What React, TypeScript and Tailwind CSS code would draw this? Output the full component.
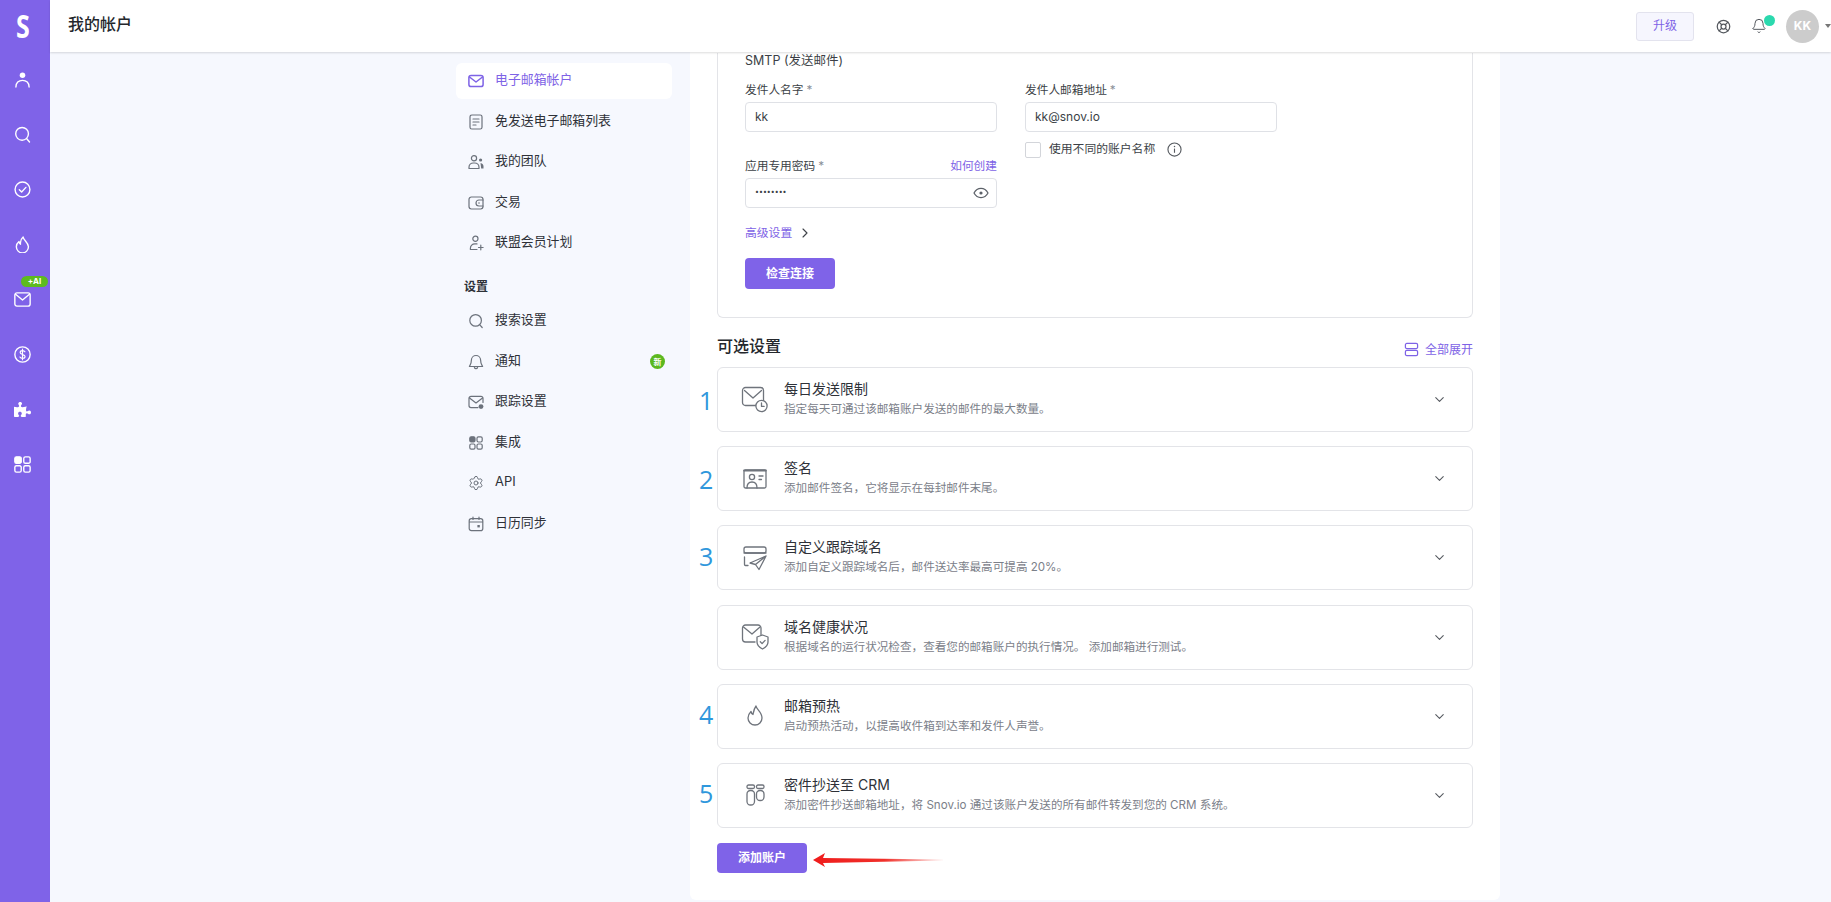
import React from "react";
import { Bell, LifeBuoy, Settings, ChevronDown, ChevronRight } from "lucide-react";
import { FaPuzzlePiece } from "react-icons/fa";

const S16 = ({ children, className = "" }: { children: React.ReactNode; className?: string }) => (
  <svg viewBox="0 0 16 16" fill="none" stroke="currentColor" strokeWidth={1.2} strokeLinecap="round" strokeLinejoin="round" className={`w-4 h-4 ${className}`}>
    {children}
  </svg>
);

const MailI = ({ w = 1.2 }: { w?: number }) => (
  <S16>
    <rect x="0.9" y="2.4" width="14.2" height="11.2" rx="2.2" strokeWidth={w} />
    <path d="M1.5 4 8 9l6.5-5" strokeWidth={w} />
  </S16>
);
const DocI = () => (
  <S16>
    <rect x="2" y="1" width="12" height="14" rx="1.8" />
    <path d="M5 5h6M5 8h6M5 11h3" />
  </S16>
);
const TeamI = () => (
  <S16>
    <circle cx="6" cy="4.2" r="2.6" />
    <path d="M1 14.5v-1.2A4.3 4.3 0 0 1 5.3 9h1.4a4.3 4.3 0 0 1 4.3 4.3v1.2z" />
    <circle cx="12.6" cy="6" r="1.6" fill="currentColor" stroke="none" />
    <path d="M12.5 9c2 .3 3 2 3 3.5v2h-2.3z" fill="currentColor" stroke="none" />
  </S16>
);
const WalletI = () => (
  <S16>
    <rect x="1" y="2" width="14" height="12" rx="2.4" />
    <path d="M15 5h-4a3 3 0 0 0 0 6h4" />
    <circle cx="11" cy="8" r="0.8" fill="currentColor" stroke="none" />
  </S16>
);
const AffI = () => (
  <S16>
    <circle cx="7.4" cy="3.8" r="2.6" />
    <path d="M2.4 14.5v-1.2a4.4 4.4 0 0 1 4.4-4.4H9M2.4 14.5H9M12.8 10.2v4.6M10.5 12.5h4.6" />
  </S16>
);
const SearchI = () => (
  <S16>
    <circle cx="7.6" cy="7.4" r="5.8" />
    <path d="m11.8 11.8 2.4 2.7" />
  </S16>
);
const BellI = () => (
  <S16>
    <path d="M8 1.5A4.6 4.6 0 0 0 3.4 6c0 4-1.4 5.4-2 6.5h13.2c-.6-1.1-2-2.5-2-6.5A4.6 4.6 0 0 0 8 1.5z" />
    <path d="M6.4 13.5a1.7 1.7 0 0 0 3.2 0" />
  </S16>
);
const TrackI = () => (
  <S16>
    <path d="M15 8.5V4.4a2 2 0 0 0-2-2H3a2 2 0 0 0-2 2v7.2a2 2 0 0 0 2 2h7" />
    <path d="M1.5 4 8 9l6.500-5" />
    <circle cx="13" cy="12.6" r="2.4" fill="currentColor" stroke="none" />
  </S16>
);
const GridI = () => (
  <S16>
    <rect x="1.8" y="1.8" width="5.2" height="5.2" rx="1.4" fill="currentColor" />
    <rect x="9" y="1.8" width="5.2" height="5.2" rx="1.4" />
    <rect x="1.8" y="9" width="5.2" height="5.2" rx="1.4" />
    <rect x="9" y="9" width="5.2" height="5.2" rx="1.4" />
  </S16>
);
const CalI = () => (
  <S16>
    <rect x="1.2" y="2.6" width="13.6" height="12" rx="2.2" />
    <path d="M1.5 6h13M5 1v2.5M11 1v2.5" />
    <rect x="9.4" y="9" width="2.4" height="2.4" fill="currentColor" stroke="none" />
  </S16>
);

const NavItem = ({ icon, label, active, badge }: { icon: React.ReactNode; label: string; active?: boolean; badge?: boolean }) => (
  <div className={`h-9 mb-[4.5px] rounded-md flex items-center pl-3 pr-[7px] ${active ? "bg-white text-[#7e63e6]" : "text-[#2e3138]"}`}>
    <span className={`w-4 h-4 mr-[11px] ${active ? "text-[#7e63e6]" : "text-[#6c727c]"}`}>{icon}</span>
    <span className="text-[12.9px] leading-4 flex-1 mb-[2px]">{label}</span>
    {badge && (
      <span className="w-[15px] h-[15px] rounded-full bg-[#5cb81f] text-white text-[8px] font-bold flex items-center justify-center">新</span>
    )}
  </div>
);

const Field = ({ label, value, right, eye }: { label: string; value: string; right?: string; eye?: boolean }) => (
  <div className="w-[252px]">
    <div className="flex justify-between h-4 mb-1 text-[11.7px] leading-4">
      <span className="text-[#3b3f46]">
        {label}
        <span className="text-[#8a8f98] ml-[3px]">*</span>
      </span>
      {right && <span className="text-[#7e63e6]">{right}</span>}
    </div>
    <div className="h-[30px] rounded border border-[#dfe1e6] bg-white flex items-center justify-between pl-[9px] pr-[7px] text-xs text-[#3b3f46]">
      <span className={eye ? "text-[7px] mb-[2px]" : ""}>{value}</span>
      {eye && (
        <svg viewBox="0 0 16 16" className="w-4 h-4" fill="none" stroke="#5b6068" strokeWidth="1.2">
          <path d="M1 8c1.6-3 4-4.6 7-4.6S13.4 5 15 8c-1.6 3-4 4.6-7 4.6S2.6 11 1 8z" />
          <circle cx="8" cy="8" r="1.6" fill="#5b6068" stroke="none" />
        </svg>
      )}
    </div>
  </div>
);

const A = ({ children, w = 28, h = 28 }: { children: React.ReactNode; w?: number; h?: number }) => (
  <svg width={w} height={h} viewBox={`0 0 ${w} ${h}`} fill="none" stroke="#6f747c" strokeWidth={1.3} strokeLinecap="round" strokeLinejoin="round">
    {children}
  </svg>
);
const I1 = () => (
  <A>
    <rect x="1.5" y="1.5" width="21" height="18" rx="3" />
    <path d="M3.5 4.5 12 12l8.5-7.5" />
    <circle cx="20.5" cy="20" r="5.6" fill="#fff" />
    <path d="M20.5 17v3.4h2.6" />
  </A>
);
const I2 = () => (
  <A>
    <rect x="3" y="5" width="22" height="18" rx="1.5" />
    <path d="M3 5.500h22" strokeWidth={1.8} />
    <circle cx="11" cy="12" r="2.6" />
    <path d="M6 23c0-4 2-6 5-6s5 2 5 6M18 11h4M18 14.500h2.500" />
  </A>
);
const I3 = () => (
  <A>
    <rect x="3" y="3" width="22" height="6" rx="2" />
    <path d="M3 9h22" />
    <path d="M3.500 13v7.500a1 1 0 0 0 1 1H7" />
    <path d="M25 12 9 19l5.500 1.500 3.500 5zM25 12 14.500 20.500" />
  </A>
);
const I4 = () => (
  <A>
    <path d="M20 13V5a3 3 0 0 0-3-3H4.500a3 3 0 0 0-3 3v11a3 3 0 0 0 3 3H14" />
    <path d="M2.500 4 11 11l8-7" />
    <path d="M21.500 12 27 14v5c0 3.500-2.500 5.500-5.500 7-3-1.500-5.500-3.500-5.500-7v-5z" fill="#fff" />
    <path d="m19.300 18.800 1.800 1.800 3-3.200" />
  </A>
);
const I5 = () => (
  <A>
    <path d="M15 4c.5 3.500 6 6 6 12a7 7 0 0 1-14 0c0-3 1.500-5 3-6.500.3 1.500 1 2.500 2 3C12.500 10 13 6.500 15 4z" />
  </A>
);
const I6 = () => (
  <A>
    <rect x="6" y="4" width="7.500" height="3.500" rx="1.500" />
    <rect x="15.500" y="4" width="7.500" height="3.500" rx="1.500" />
    <rect x="6" y="9.500" width="7.500" height="14.500" rx="3.500" />
    <rect x="15.500" y="9.500" width="7.500" height="10" rx="3.500" />
  </A>
);

const Card = ({ icon, title, desc, mark, markTop = "top-[16px]" }: { icon: React.ReactNode; title: string; desc: string; mark?: string; markTop?: string }) => (
  <div className="relative h-[65px] rounded-md border border-[#e3e4e8] bg-white flex items-center pl-[23px] pr-[25px]">
    {mark && <span className={`absolute left-[-19px] text-[25px] leading-8 text-[#2f97dc] font-['Open_Sans',sans-serif] ${markTop}`}>{mark}</span>}
    <span className="w-7 h-7 mr-[15px]">{icon}</span>
    <div className="flex-1">
      <div className="text-[14px] leading-5 text-[#2e3138] mt-[-1px]">{title}</div>
      <div className="text-[11.6px] leading-5 text-[#7b8089]">{desc}</div>
    </div>
    <ChevronDown className="w-[15px] h-[15px] text-[#55595f]" strokeWidth={1.7} />
  </div>
);

const Side = ({ children }: { children: React.ReactNode }) => (
  <div className="relative h-[55px] pr-[5px] flex items-center justify-center text-white">{children}</div>
);
const SV = ({ children }: { children: React.ReactNode }) => (
  <svg viewBox="0 0 16 16" className="w-[17px] h-[17px]" fill="none" stroke="#fff" strokeWidth={1.3} strokeLinecap="round" strokeLinejoin="round">
    {children}
  </svg>
);

export default function App() {
  return (
    <div className="h-[902px] w-[1831px] overflow-hidden flex bg-[#f6f8fe] font-[Inter,'Noto_Sans_CJK_SC',sans-serif]">
      <aside className="w-[50px] shrink-0 bg-[#7f63e8] flex flex-col items-stretch">
        <div className="h-[52px] pr-[5px] flex items-center justify-center text-white text-[32px] font-bold font-['Open_Sans',sans-serif]">
          <span className="block scale-x-[0.78]">S</span>
        </div>
        <Side>
          <SV>
            <circle cx="8" cy="4" r="2.6" fill="#fff" stroke="none" />
            <path d="M1.800 15c0-4 2.500-6.200 6.200-6.200s6.200 2.200 6.200 6.200" />
          </SV>
        </Side>
        <Side>
          <SV>
            <circle cx="7.600" cy="7.400" r="6" />
            <path d="m12 12 2.600 3" />
          </SV>
        </Side>
        <Side>
          <SV>
            <circle cx="8" cy="8" r="7" />
            <path d="m5 8.200 2.200 2.200 4-4.400" />
          </SV>
        </Side>
        <Side>
          <SV>
            <path d="M8.600 1c.4 3 5 5 5 9.200a5.700 5.700 0 0 1-11.400 0c0-2.300 1.100-3.900 2.500-5 .2 1.200.6 1.900 1.400 2.500C5.800 5.600 6.800 2.600 8.600 1z" />
          </SV>
        </Side>
        <Side>
          <SV>
            <rect x="0.800" y="1.800" width="14.400" height="12.400" rx="2" />
            <path d="M1.500 3 8 8.500 14.500 3" />
          </SV>
          <span className="absolute left-[21px] top-[4px] w-[27px] h-[11px] rounded-full bg-[#5dbb1f] text-white text-[8px] leading-[11px] font-bold text-center">+AI</span>
        </Side>
        <Side>
          <SV>
            <circle cx="8" cy="8" r="7.200" />
            <path d="M10.300 5.500c-.4-.8-1.200-1.200-2.300-1.200-1.300 0-2.200.7-2.200 1.800 0 2.400 4.600 1.300 4.600 3.800 0 1.100-1 1.800-2.400 1.800-1.100 0-2-.5-2.400-1.300M8 3v10" strokeWidth={1.100} />
          </SV>
        </Side>
        <Side>
          <FaPuzzlePiece className="w-[17px] h-[17px] text-white" />
        </Side>
        <Side>
          <SV>
            <rect x="0.800" y="0.800" width="6" height="6" rx="1.500" fill="#fff" />
            <rect x="9.200" y="0.800" width="6" height="6" rx="1.500" />
            <rect x="0.800" y="9.200" width="6" height="6" rx="1.500" />
            <rect x="9.200" y="9.200" width="6" height="6" rx="1.500" />
          </SV>
        </Side>
      </aside>

      <div className="flex-1 min-w-0 flex flex-col">
        <header className="relative z-10 h-[52px] shrink-0 bg-white shadow-[0_1px_2px_rgba(0,0,0,0.14)] flex items-center pl-[18px]">
          <h1 className="text-base leading-6 font-medium text-[#24272c] mb-[4px]">我的帐户</h1>
          <div className="ml-auto flex items-center">
            <button className="w-[58px] h-[29px] mr-[22px] rounded-[3px] border border-[#e3e3ee] bg-[#f6f6fe] text-xs text-[#7e63e6]">升级</button>
            <LifeBuoy className="w-[15px] h-[15px] text-[#55595f] mr-[20px]" strokeWidth={2} />
            <div className="relative w-4 h-4 mr-[19px]">
              <Bell className="w-4 h-4 text-[#55595f]" strokeWidth={1.5} />
              <span className="absolute left-[13px] top-[-3px] w-[11px] h-[11px] rounded-full bg-[#2bd9ae]" />
            </div>
            <div className="w-[33px] h-[33px] rounded-full bg-[#cccccc] text-white text-xs font-bold flex items-center justify-center mr-[6px]">KK</div>
            <span className="w-0 h-0 border-x-[3.5px] border-x-transparent border-t-[4px] border-t-[#777]" />
          </div>
        </header>

        <div className="flex-1 min-h-0 flex pl-[406px]">
          <nav className="w-[216px] pt-[11px] mr-[18px]">
            <NavItem active icon={<MailI w={1.5} />} label="电子邮箱帐户" />
            <NavItem icon={<DocI />} label="免发送电子邮箱列表" />
            <NavItem icon={<TeamI />} label="我的团队" />
            <NavItem icon={<WalletI />} label="交易" />
            <NavItem icon={<AffI />} label="联盟会员计划" />
            <div className="h-4 mt-[18px] mb-[8px] pl-[8px] text-xs leading-4 font-bold text-[#2e3138]">设置</div>
            <NavItem icon={<SearchI />} label="搜索设置" />
            <NavItem badge icon={<BellI />} label="通知" />
            <NavItem icon={<TrackI />} label="跟踪设置" />
            <NavItem icon={<GridI />} label="集成" />
            <NavItem icon={<Settings className="w-4 h-4" strokeWidth={1.5} />} label="API" />
            <NavItem icon={<CalI />} label="日历同步" />
          </nav>

          <main className="w-[810px] h-[848px] bg-white rounded-b-md pl-[27px] pr-[27px]">
            <section className="h-[264.5px] rounded-b-md border border-t-0 border-[#e3e4e8] pl-[27px]">
              <div className="h-4 mt-[1px] text-[12.5px] leading-4 text-[#3b3f46]">SMTP (发送邮件)</div>
              <div className="flex gap-[28px] mt-[13px]">
                <div className="w-[252px]">
                  <Field label="发件人名字" value="kk" />
                  <div className="mt-[26px]">
                    <Field label="应用专用密码" value="••••••••" right="如何创建" eye />
                  </div>
                </div>
                <div className="w-[252px]">
                  <Field label="发件人邮箱地址" value="kk@snov.io" />
                  <div className="flex items-center mt-[9px] text-[11.8px] text-[#3b3f46]">
                    <span className="w-4 h-4 rounded-[2px] border border-[#d3d5da] mr-2" />
                    <span>使用不同的账户名称</span>
                    <svg viewBox="0 0 16 16" className="w-[15px] h-[15px] ml-[12px]" fill="none" stroke="#55595f" strokeWidth="1.200">
                      <circle cx="8" cy="8" r="7" />
                      <path d="M8 7v4.500" />
                      <circle cx="8" cy="4.700" r="0.800" fill="#55595f" stroke="none" />
                    </svg>
                  </div>
                </div>
              </div>
              <div className="flex items-center h-4 mt-[17px] text-[11.8px] leading-4 text-[#7e63e6]">
                <span>高级设置</span>
                <ChevronRight className="w-[16px] h-[16px] ml-[5px] text-[#3f4349]" strokeWidth={1.7} />
              </div>
              <button className="block w-[90px] h-[31px] mt-[17px] rounded-[4px] bg-[#7f63e8] text-xs font-bold text-white">检查连接</button>
            </section>

            <div className="flex justify-between items-end h-6 mt-[16px]">
              <h2 className="text-base leading-6 font-medium text-[#24272c]">可选设置</h2>
              <div className="flex items-center h-4 text-xs text-[#7e63e6]">
                <svg viewBox="0 0 16 16" className="w-[15px] h-[15px] mr-[6px]" fill="none" stroke="#7e63e6" strokeWidth="1.300">
                  <rect x="1.500" y="1.500" width="13" height="5.500" rx="1.500" />
                  <rect x="1.500" y="9" width="13" height="5.500" rx="1.500" />
                </svg>
                全部展开
              </div>
            </div>

            <div className="flex flex-col gap-[14.2px] mt-[9.5px]">
              <Card mark="1" icon={<I1 />} title="每日发送限制" desc="指定每天可通过该邮箱账户发送的邮件的最大数量。" />
              <Card mark="2" icon={<I2 />} title="签名" desc="添加邮件签名，它将显示在每封邮件末尾。" />
              <Card mark="3" markTop="top-[14px]" icon={<I3 />} title="自定义跟踪域名" desc="添加自定义跟踪域名后，邮件送达率最高可提高 20%。" />
              <Card icon={<I4 />} title="域名健康状况" desc="根据域名的运行状况检查，查看您的邮箱账户的执行情况。 添加邮箱进行测试。" />
              <Card mark="4" markTop="top-[13px]" icon={<I5 />} title="邮箱预热" desc="启动预热活动，以提高收件箱到达率和发件人声誉。" />
              <Card mark="5" markTop="top-[13px]" icon={<I6 />} title="密件抄送至 CRM" desc="添加密件抄送邮箱地址，将 Snov.io 通过该账户发送的所有邮件转发到您的 CRM 系统。" />
            </div>

            <div className="relative mt-[15px]">
              <button className="block w-[90px] h-[30px] rounded-[4px] bg-[#7f63e8] text-xs font-bold text-white">添加账户</button>
              <svg className="absolute left-[95px] top-[9px]" width="132" height="16" viewBox="0 0 132 16">
                <defs>
                  <linearGradient id="ar" x1="0" x2="1" y1="0" y2="0">
                    <stop offset="0" stopColor="#ef1c1c" />
                    <stop offset="0.55" stopColor="#f0302a" />
                    <stop offset="1" stopColor="#f0302a" stopOpacity="0.05" />
                  </linearGradient>
                </defs>
                <path d="M1 8 13 1l-2 5L131 7.400v1L11 11 13 15z" fill="url(#ar)" />
              </svg>
            </div>
          </main>
        </div>
      </div>
    </div>
  );
}
